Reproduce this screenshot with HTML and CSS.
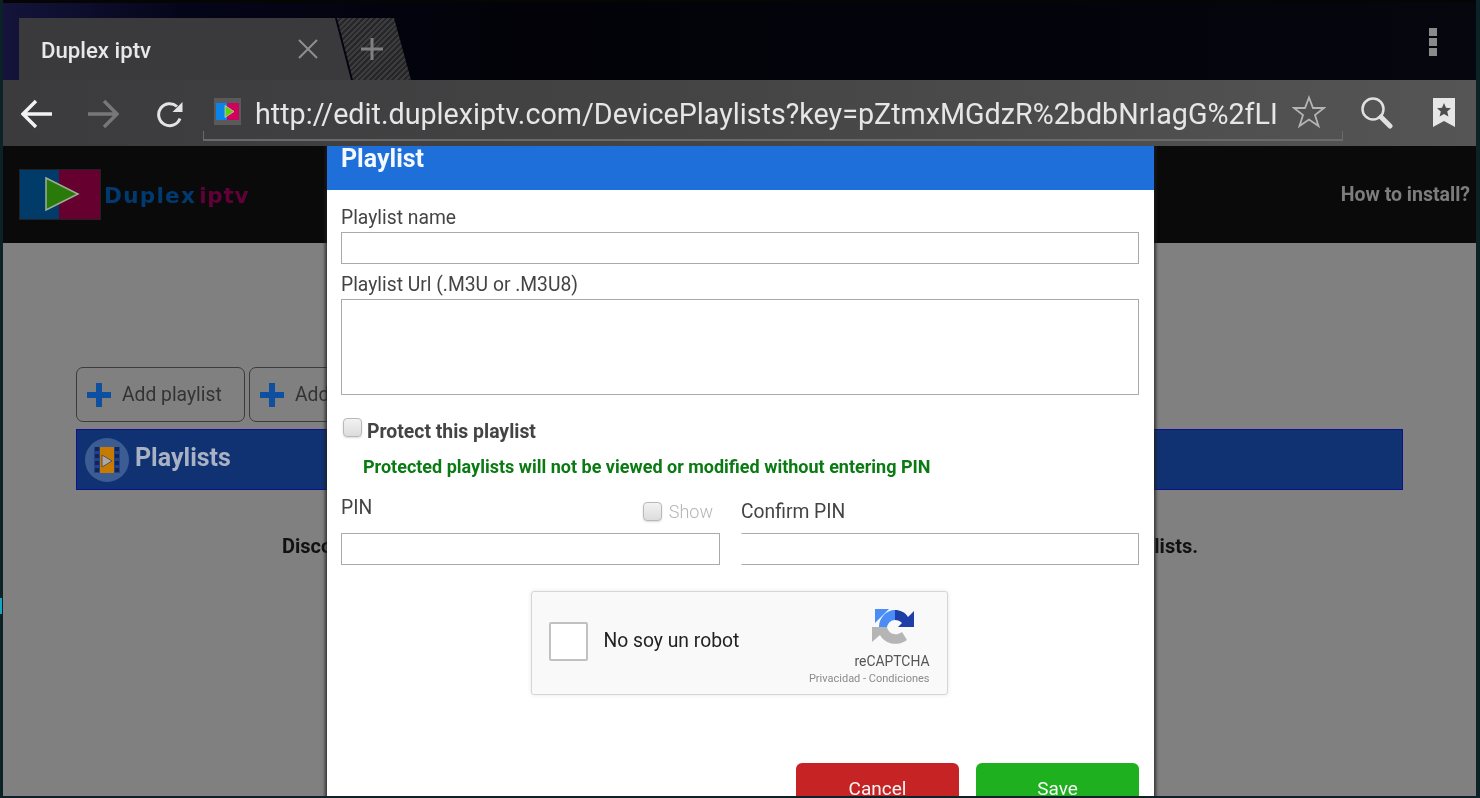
FILE: index.html
```html
<!DOCTYPE html>
<html lang="en">
<head>
<meta charset="utf-8">
<title>Duplex iptv</title>
<link rel="stylesheet" href="styles.css">
</head>
<body>
<span class="edge-glow"></span>
<div class="screen">
  <div class="browser">
    <div class="tabstrip">
      <div class="tab">
        <span class="tab-title">Duplex iptv</span>
        <svg class="tab-close" width="22" height="22" viewBox="0 0 22 22"><path d="M2 2 20 20M20 2 2 20" stroke="#8f8f8f" stroke-width="2" fill="none"/></svg>
      </div>
      <div class="newtab">
        <svg width="24" height="24" viewBox="0 0 24 24"><path d="M12 1v22M1 12h22" stroke="#808080" stroke-width="3" fill="none"/></svg>
      </div>
      <div class="menu-dots"><i></i><i></i><i></i></div>
    </div>
    <div class="toolbar">
      <svg class="tb-back" width="32" height="30" viewBox="0 0 32 30"><path d="M31 15H3M15 2 2 15l13 13" stroke="#f2f2f2" stroke-width="3.4" fill="none"/></svg>
      <svg class="tb-forward" width="32" height="30" viewBox="0 0 32 30"><path d="M1 15h28M17 2l13 13-13 13" stroke="#777" stroke-width="3.4" fill="none"/></svg>
      <svg class="tb-reload" width="28" height="28" viewBox="0 0 28 28"><path d="M24 18.500A11 11 0 1 1 21 6.500" stroke="#e4e4e4" stroke-width="3" fill="none"/><path d="M26.500 2v10H16.500z" fill="#e4e4e4"/></svg>
      <div class="omnibox">
        <span class="favicon">
          <svg width="27" height="27" viewBox="0 0 27 27"><rect width="27" height="27" fill="#5a5a5a"/><rect x="2" y="5" width="12" height="17" fill="#0a84e8"/><rect x="13" y="5" width="12" height="17" fill="#d0005f"/><path d="M11 7.500 20 13.500 11 19.500z" fill="#5fd010" stroke="#ddd" stroke-width=".6"/></svg>
        </span>
        <span class="url">http://edit.duplexiptv.com/DevicePlaylists?key=pZtmxMGdzR%2bdbNrIagG%2fLI</span>
        <svg class="tb-star" width="34" height="34" viewBox="0 0 34 34"><path d="M17 2.500 21 13h11l-9 7 3.500 11L17 24.500 7.500 31 11 20l-9-7h11z" stroke="#b4b4b4" stroke-width="1.800" fill="none"/></svg>
      </div>
      <svg class="tb-search" width="33" height="33" viewBox="0 0 33 33"><circle cx="13" cy="13" r="10.500" stroke="#e0e0e0" stroke-width="2.500" fill="none"/><path d="M21 21 30 30" stroke="#e0e0e0" stroke-width="5" stroke-linecap="round"/></svg>
      <svg class="tb-bookmark" width="24" height="31" viewBox="0 0 24 31"><path d="M1 1h22v29l-11-6-11 6z" fill="#e6e6e6"/><path d="M12 6l2 4.800 5 .4-3.800 3.300 1.200 5L12 16.900 7.600 19.500l1.200-5L5 11.200l5-.4z" fill="#4d4d4d"/></svg>
    </div>
  </div>
  <div class="page">
    <header class="site-header">
      <div class="logo">
        <svg width="84" height="53" viewBox="0 0 84 53"><rect x="1" y="1" width="82" height="51" fill="#222"/><rect x="2" y="2" width="39" height="49" fill="#003b6a"/><rect x="41" y="2" width="41" height="49" fill="#66002f"/><path d="M28 10 60 26 28 42z" fill="#2a7a0a" stroke="#9fae9a" stroke-width="1.500"/></svg>
        <span class="logo-word"><span class="logo-duplex">Duplex</span><span class="logo-iptv">iptv</span></span>
      </div>
      <a class="install-link">How to install?</a>
    </header>
    <main class="content">
      <div class="actions">
        <button class="add-btn">
          <svg width="24" height="24" viewBox="0 0 24 24"><path d="M12 0v24M0 12h24" stroke="#0f4f9f" stroke-width="6"/></svg>
          <span>Add playlist</span>
        </button>
        <button class="add-btn">
          <svg width="24" height="24" viewBox="0 0 24 24"><path d="M12 0v24M0 12h24" stroke="#0f4f9f" stroke-width="6"/></svg>
          <span>Add playlist</span>
        </button>
      </div>
      <div class="section-bar">
        <span class="section-icon">
          <svg width="44" height="44" viewBox="0 0 44 44"><circle cx="22" cy="22" r="22" fill="#3c5c94"/><rect x="9" y="9" width="26" height="26" fill="#24418f"/><rect x="15" y="9" width="14" height="26" fill="#c67a00"/><path d="M12 9v26M32 9v26" stroke="#14264f" stroke-width="4" stroke-dasharray="4 3"/><path d="M17 17l10 6-10 6z" fill="#a9a9a9" stroke="#555" stroke-width="1"/></svg>
        </span>
        <span class="section-title">Playlists</span>
      </div>
      <p class="notice">Discover all of your playlists here by adding one with the buttons above to list your playlists.</p>
    </main>
    <section class="modal">
      <h2 class="modal-title">Playlist</h2>
      <div class="modal-body">
        <label class="field-label name-label">Playlist name</label>
        <input class="text-input" type="text">
        <label class="field-label url-label">Playlist Url (.M3U or .M3U8)</label>
        <textarea class="text-area"></textarea>
        <div class="protect-row">
          <span class="check"></span>
          <span class="protect-label">Protect this playlist</span>
        </div>
        <p class="protect-note">Protected playlists will not be viewed or modified without entering PIN</p>
        <div class="pin-row">
          <div class="pin-col pin-left">
            <div class="pin-head">
              <label class="field-label pin-label">PIN</label>
              <span class="show-wrap"><span class="check check-small"></span><span class="show-label">Show</span></span>
            </div>
            <input class="text-input" type="text">
          </div>
          <div class="pin-col pin-right">
            <div class="pin-head">
              <label class="field-label confirm-label">Confirm PIN</label>
            </div>
            <input class="text-input no-left" type="text">
          </div>
        </div>
        <div class="captcha">
          <span class="captcha-box"></span>
          <span class="captcha-text">No soy un robot</span>
          <div class="captcha-brand">
            <svg width="44" height="44" viewBox="0 0 44 44">
              <path d="M8 22C8 13 15 5 24 5V15C20 15 17 18 16 22z" fill="#4a8df6"/>
              <path d="M4 4 18 4 4 18z" fill="#4a8df6"/>
              <path d="M24 5C29 5 34 7 37 12L43 6V22H27L31 18C29 16 27 15 24 15z" fill="#1f3fa8"/>
              <path d="M1 22H16C17 28 24 32 31 27L36 35C26 42 14 39 9 30L1 37z" fill="#b5b5b5"/>
            </svg>
            <span class="captcha-name">reCAPTCHA</span>
            <span class="captcha-links">Privacidad - Condiciones</span>
          </div>
        </div>
        <div class="modal-actions">
          <button class="modal-btn btn-cancel">Cancel</button>
          <button class="modal-btn btn-save">Save</button>
        </div>
      </div>
    </section>
  </div>
</div>
</body>
</html>
```
FILE: styles.css
```css
* { box-sizing: border-box; }
html, body { margin: 0; padding: 0; height: 100%; overflow: hidden; background: #0d2226; }
body { font-family: Roboto, "Liberation Sans", sans-serif; }

.screen { width: 1473px; height: 796px; margin-left: 3px; display: flex; flex-direction: column; overflow: hidden; filter: blur(.4px); }
.edge-glow { position: absolute; left: 0; top: 598px; width: 2px; height: 16px; background: #12a5c4; }

.browser { flex: none; }
.tabstrip { height: 80px; display: flex; padding: 15px 0 0 16px; background: linear-gradient(90deg, #14143c 0, #05051a 12%, #020208 35%, #03030c 70%, #06060f 100%); border-top: 3px solid #050505; }
.tab { width: 332px; height: 62px; background: #3a3a3c; clip-path: polygon(0 0, 316px 0, 332px 100%, 0 100%); display: flex; align-items: center; padding: 0 0 0 22px; }
.tab-title { font-size: 22.200px; font-weight: 500; color: #e8e8e8; width: 256px; margin-top: 2px; white-space: nowrap; }
.newtab { width: 74px; height: 62px; margin-left: -14px; clip-path: polygon(0 0, 57px 0, 74px 100%, 16px 100%); background: repeating-linear-gradient(135deg, #3c3c3e 0 2px, #262628 2px 4px); display: flex; align-items: center; padding: 0 0 0 23px; }
.menu-dots { margin-left: auto; margin-right: 39px; margin-top: 10px; display: flex; flex-direction: column; gap: 2px; }
.menu-dots i { display: block; width: 8px; height: 8px; background: #8a8a8a; }

.toolbar { height: 66px; background: linear-gradient(90deg, #3b3b3d 0, #454546 50%, #555 100%); display: flex; align-items: center; padding-left: 18px; }
.tb-back { flex: none; margin-top: 2px; }
.tb-forward { flex: none; margin-left: 34px; margin-top: 2px; }
.tb-reload { flex: none; margin-left: 37px; margin-top: 2px; }
.omnibox { flex: none; width: 1140px; height: 60px; margin-left: 19px; margin-top: -4px; display: flex; align-items: center; padding-left: 10px; border-bottom: 2px solid #666; border-left: 1px solid #666; border-right: 1px solid #666; border-image: linear-gradient(#0000 85%, #6a6a6a 85%) 1; }
.favicon { flex: none; display: block; height: 27px; margin-top: 3px; }
.url { flex: none; width: 1021px; margin-left: 14px; font-size: 28.700px; line-height: 36px; color: #e6e6e6; white-space: nowrap; overflow: hidden; margin-top: 8px; }
.tb-star { flex: none; margin-left: 16px; margin-top: 3px; }
.tb-search { flex: none; margin-left: 17px; margin-top: -2px; }
.tb-bookmark { flex: none; margin-left: 39px; margin-top: -2px; }

.page { position: relative; flex: 1; min-height: 0; background: #808080; overflow: hidden; }
.site-header { height: 97px; background: #0a0a0a; display: flex; align-items: center; justify-content: space-between; padding: 0 6px 0 15px; }
.logo { display: flex; align-items: center; margin-top: -1px; }
.logo-word { font-family: "DejaVu Sans", sans-serif; font-weight: 700; font-size: 21.500px; letter-spacing: 1.300px; margin-left: 2px; margin-top: 3px; }
.logo-duplex { color: #003a70; }
.logo-iptv { color: #62003a; margin-left: 3px; letter-spacing: .8px; }
.install-link { font-size: 19.500px; font-weight: 700; color: #7d7d7d; margin-top: -1px; }

.content { padding: 124px 73px 0 73px; }
.actions { display: flex; gap: 4px; }
.add-btn { width: 169px; height: 55px; border: 1.500px solid #3c3c3c; border-radius: 7px; background: #808080; display: flex; align-items: center; padding: 0 0 0 10px; font: 400 19.300px Roboto, sans-serif; color: #333; flex: none; white-space: nowrap; overflow: hidden; }
.add-btn span { margin-left: 11px; }
.section-bar { height: 61px; margin-top: 7px; width: 1327px; background: #113272; border: 1px solid #0f0f90; display: flex; align-items: center; padding-left: 8px; }
.section-icon { display: block; height: 44px; }
.section-title { font-size: 25px; font-weight: 700; color: #a9b2c2; margin-left: 6px; margin-top: -4px; }
.notice { width: 916px; margin: 44px 0 0 206px; text-align: justify; text-align-last: justify; font-size: 20px; font-weight: 700; color: #111; }

.modal { position: absolute; left: 324px; top: 0; width: 827px; height: 720px; background: #fff; box-shadow: 0 0 3px 2px rgba(30,30,30,.75); }
.modal-title { height: 44px; margin: 0; padding: 0 14px; background: #1e6fd9; color: #f4f8ff; font-size: 25px; line-height: 26px; font-weight: 700; }
.modal-body { padding: 14px 15px 0 14px; }
.field-label { display: block; font-size: 19.300px; line-height: 24px; color: #444; white-space: nowrap; }
.name-label { position: relative; top: 2px; }
.text-input { display: block; width: 100%; height: 32px; border: 1px solid #aaa; background: #fff; outline: none; padding: 0; margin-top: 4px; }
.url-label { margin-top: 9px; }
.text-area { display: block; width: 100%; height: 96px; border: 1px solid #aaa; margin: 2px 0 0; padding: 0; resize: none; outline: none; }
.protect-row { display: flex; align-items: flex-start; margin-top: 23px; padding-left: 2px; }
.check { display: block; flex: none; width: 19px; height: 19px; border: 1px solid #b9b9b9; border-radius: 4px; background: linear-gradient(#f2f2f2, #dcdcdc); box-shadow: 0 1px 2px rgba(0,0,0,.15); }
.protect-label { font-size: 19.400px; font-weight: 700; color: #444; margin-left: 5px; line-height: 24px; margin-top: 2px; white-space: nowrap; }
.protect-note { margin: 11px 0 0 22px; font-size: 18px; line-height: 24px; font-weight: 700; color: #0a7a12; white-space: nowrap; }
.pin-row { display: flex; gap: 21px; margin-top: 15px; }
.pin-col { display: flex; flex-direction: column; }
.pin-left { width: 379px; flex: none; }
.pin-right { flex: 1; }
.pin-head { display: flex; align-items: flex-start; justify-content: space-between; height: 39px; }
.pin-label { margin-top: 2px; }
.confirm-label { margin-top: 6px; }
.show-wrap { display: flex; align-items: center; margin-top: 7px; margin-right: 7px; }
.show-label { font-size: 18px; font-weight: 300; color: #b5b5b5; margin-left: 7px; }
.pin-col .text-input { margin-top: 0; }
.no-left { border-left-color: #fff; }
.captcha { width: 417px; height: 104px; margin: 26px auto 0; transform: translateX(-1px); border: 1px solid #d6d6d6; border-radius: 3px; background: #f9f9f9; box-shadow: 0 0 4px rgba(0,0,0,.1); display: flex; align-items: center; padding: 0 17px; }
.captcha-box { display: block; flex: none; width: 39px; height: 39px; border: 2.500px solid #c1c1c1; border-radius: 2px; background: #fff; margin-top: -3px; }
.captcha-text { font-size: 19.300px; color: #222; margin-left: 16px; margin-top: -6px; white-space: nowrap; }
.captcha-brand { margin-left: auto; display: flex; flex-direction: column; align-items: flex-end; }
.captcha-brand svg { margin-right: 15px; margin-top: 4px; }
.captcha-name { font-size: 13.900px; line-height: 16px; color: #555; margin-top: 4px; }
.captcha-links { font-size: 11px; line-height: 14px; color: #8c8c8c; margin-top: 3px; white-space: nowrap; }
.modal-actions { display: flex; justify-content: flex-end; gap: 17px; margin-top: 68px; }
.modal-btn { width: 163px; height: 50px; border: 0; border-radius: 6px; color: #f6f6f6; font: 400 19px Roboto, sans-serif; }
.btn-cancel { background: #c62424; }
.btn-save { background: #1fb020; }
```
